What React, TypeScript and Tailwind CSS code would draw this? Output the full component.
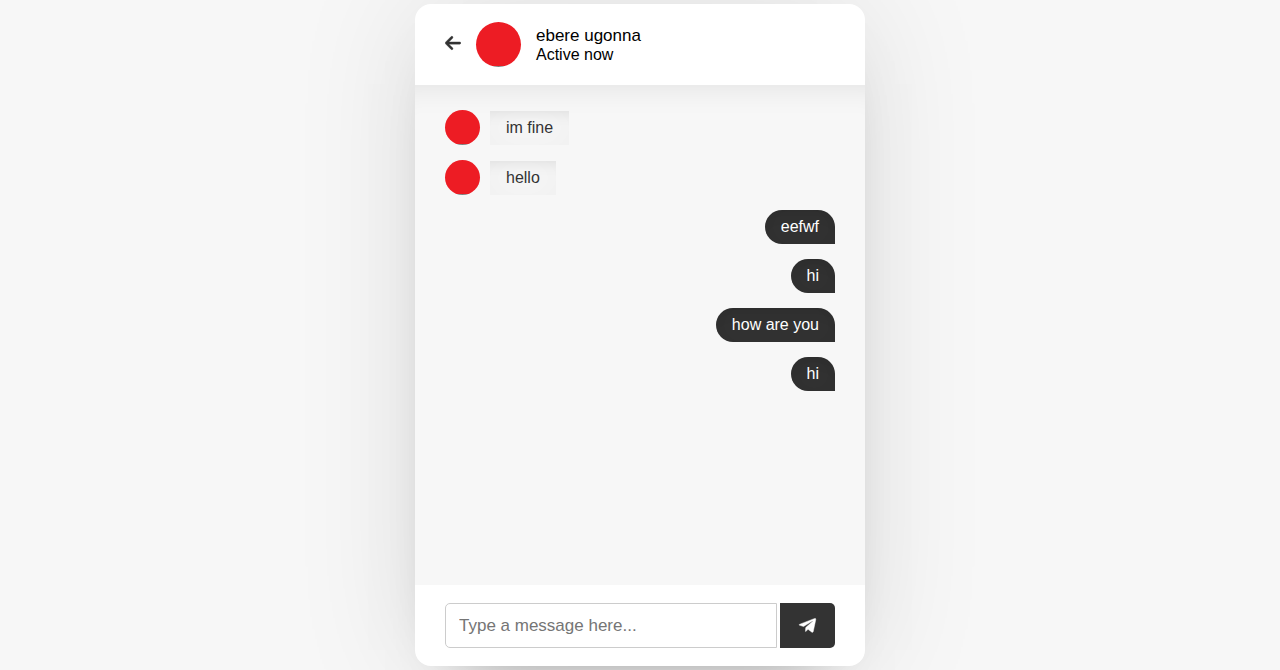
import { FaTelegramPlane } from 'react-icons/fa';
import { FaArrowLeft } from 'react-icons/fa6';

type Message = { id: number; text: string; mine: boolean };

const messages: Message[] = [
  { id: 1, text: 'im fine', mine: false },
  { id: 2, text: 'hello', mine: false },
  { id: 3, text: 'eefwf', mine: true },
  { id: 4, text: 'hi', mine: true },
  { id: 5, text: 'how are you', mine: true },
  { id: 6, text: 'hi', mine: true },
];

function Incoming({ text }: { text: string }) {
  return (
    <li className="flex items-end gap-2.5">
      <span className="size-[35px] shrink-0 rounded-full bg-[linear-gradient(#ed1c24_97%,#7f7f7f_97%)]" />
      <p className="bg-[#f7f7f7] px-4 py-2 leading-[18px] text-[#333] shadow-[inset_0_0_32px_rgba(0,0,0,0.03),inset_0_16px_16px_-16px_rgba(0,0,0,0.1)]">
        {text}
      </p>
    </li>
  );
}

function Outgoing({ text }: { text: string }) {
  return (
    <li className="flex justify-end">
      <p className="rounded-[18px] rounded-br-none bg-[#333] px-4 py-2 leading-[18px] text-white shadow-[inset_0_0_32px_rgba(0,0,0,0.08),inset_0_16px_16px_-16px_rgba(0,0,0,0.1)]">
        {text}
      </p>
    </li>
  );
}

export default function App() {
  return (
    <div className="flex min-h-screen items-center justify-center overflow-hidden bg-[#f7f7f7] font-['Liberation_Sans',Arial,sans-serif] text-base text-black">
      <main className="w-full max-w-[450px] rounded-2xl bg-white shadow-[0_0_128px_0_rgba(0,0,0,0.1),0_32px_64px_-48px_rgba(0,0,0,0.5)]">
        <header className="flex items-center px-[30px] py-[18px]">
          <a href="#users" aria-label="Back" className="pb-[3px] text-[#333]">
            <FaArrowLeft className="h-[18px] w-4 stroke-[#333] stroke-[10px]" />
          </a>
          <span className="mx-[15px] size-[45px] shrink-0 rounded-full bg-[linear-gradient(#ed1c24_98%,#7f7f7f_98%)]" />
          <div>
            <h1 className="text-[17px] leading-[19px]">ebere ugonna</h1>
            <p className="leading-[19px]">Active now</p>
          </div>
        </header>
        <ul className="flex h-[500px] flex-col gap-[15px] overflow-y-auto bg-[#f7f7f7] px-[30px] py-[25px] shadow-[inset_0_32px_32px_-32px_rgba(0,0,0,0.1)]">
          {messages.map((m) =>
            m.mine ? <Outgoing key={m.id} text={m.text} /> : <Incoming key={m.id} text={m.text} />,
          )}
        </ul>
        <form className="flex gap-[3px] px-[30px] py-[18px]" onSubmit={(e) => e.preventDefault()}>
          <input
            type="text"
            aria-label="Message"
            placeholder="Type a message here..."
            className="h-[45px] min-w-0 flex-1 rounded-l-[5px] border border-[#ccc] px-[13px] text-[17px] outline-none placeholder:text-[#757575]"
          />
          <button
            type="submit"
            aria-label="Send"
            className="flex h-[45px] w-[55px] items-center justify-center rounded-r-[5px] bg-[#333] text-[19px] text-white"
          >
            <FaTelegramPlane className="stroke-white stroke-[12px]" />
          </button>
        </form>
      </main>
    </div>
  );
}
